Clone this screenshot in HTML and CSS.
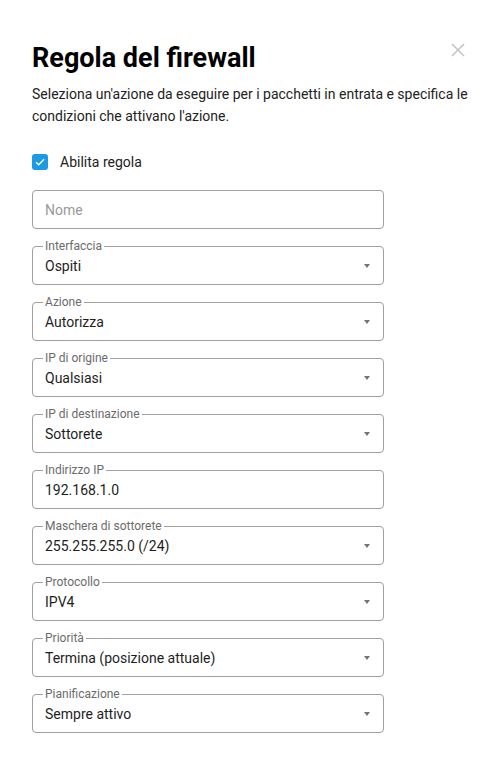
FILE: index.html
```html
<!DOCTYPE html>
<html lang="it">
<head>
<meta charset="utf-8">
<title>Regola del firewall</title>
<link rel="stylesheet" href="styles.css">
</head>
<body>
<div class="dialog">
  <button class="close" aria-label="Chiudi">
    <svg width="14" height="14" viewBox="0 0 14 14"><path d="M1 1L13 13M13 1L1 13" stroke="#c4c4c4" stroke-width="1.6" fill="none"/></svg>
  </button>
  <h1 class="title">Regola del firewall</h1>
  <p class="desc">Seleziona un'azione da eseguire per i pacchetti in entrata e specifica le condizioni che attivano l'azione.</p>
  <label class="check-row">
    <span class="checkbox">
      <svg width="10" height="8" viewBox="0 0 10 8"><path d="M1 4.2L3.7 6.8L9 1.3" stroke="#fff" stroke-width="1.4" fill="none"/></svg>
    </span>
    <span class="check-label">Abilita regola</span>
  </label>
  <div class="fields">
    <div class="field"><span class="placeholder">Nome</span></div>
    <div class="field select"><span class="flabel">Interfaccia</span><span class="value">Ospiti</span><span class="arrow"></span></div>
    <div class="field select"><span class="flabel">Azione</span><span class="value">Autorizza</span><span class="arrow"></span></div>
    <div class="field select"><span class="flabel">IP di origine</span><span class="value">Qualsiasi</span><span class="arrow"></span></div>
    <div class="field select"><span class="flabel">IP di destinazione</span><span class="value">Sottorete</span><span class="arrow"></span></div>
    <div class="field"><span class="flabel">Indirizzo IP</span><span class="value">192.168.1.0</span></div>
    <div class="field select"><span class="flabel">Maschera di sottorete</span><span class="value">255.255.255.0 (/24)</span><span class="arrow"></span></div>
    <div class="field select"><span class="flabel">Protocollo</span><span class="value">IPV4</span><span class="arrow"></span></div>
    <div class="field select"><span class="flabel">Priorità</span><span class="value">Termina (posizione attuale)</span><span class="arrow"></span></div>
    <div class="field select"><span class="flabel">Pianificazione</span><span class="value">Sempre attivo</span><span class="arrow"></span></div>
  </div>
</div>
</body>
</html>
```

FILE: styles.css
```css
html, body {
  margin: 0;
  padding: 0;
  background: #fff;
}
body {
  font-family: Roboto, "Liberation Sans", Arial, sans-serif;
  color: #222;
}
.dialog {
  position: relative;
  padding: 42px 32px 0 32px;
}
.close {
  position: absolute;
  top: 43px;
  right: 35px;
  width: 14px;
  height: 14px;
  padding: 0;
  border: 0;
  background: none;
  display: flex;
}
.title {
  margin: 0;
  font-size: 27px;
  line-height: 32px;
  font-weight: 700;
  color: #000;
}
.desc {
  margin: 9px 0 0 0;
  font-size: 14px;
  line-height: 22px;
  color: #222;
}
.check-row {
  display: flex;
  align-items: center;
  gap: 12px;
  margin-top: 23px;
  height: 24px;
}
.checkbox {
  width: 16px;
  height: 16px;
  border-radius: 3px;
  background: #1b9ae6;
  display: flex;
  align-items: center;
  justify-content: center;
}
.check-label {
  font-size: 14px;
  color: #222;
}
.fields {
  margin-top: 16px;
  width: 352px;
  display: flex;
  flex-direction: column;
  gap: 17px;
}
.field {
  position: relative;
  box-sizing: border-box;
  height: 39px;
  border: 1px solid #a0a0a0;
  border-radius: 4px;
  display: flex;
  align-items: center;
  padding: 0 12px;
  font-size: 14px;
}
.placeholder {
  color: #9a9a9a;
}
.value {
  color: #1e1e1e;
  flex: 1;
}
.flabel {
  position: absolute;
  left: 10px;
  top: -9px;
  padding: 0 2px;
  background: #fff;
  font-size: 12px;
  line-height: 16px;
  color: #6b6b6b;
}
.arrow {
  width: 0;
  height: 0;
  border-left: 3.5px solid transparent;
  border-right: 3.5px solid transparent;
  border-top: 4px solid #757575;
  margin-right: 1px;
}
```
